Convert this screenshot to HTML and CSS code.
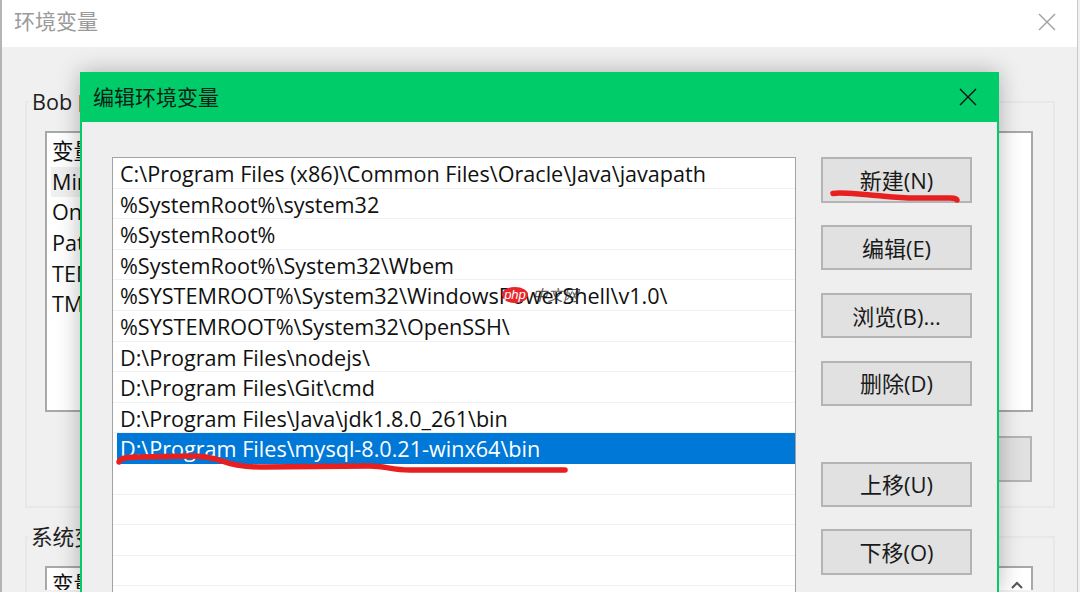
FILE: index.html
```html
<!DOCTYPE html>
<html lang="zh-CN">
<head>
<meta charset="utf-8">
<title>编辑环境变量</title>
<link rel="stylesheet" href="styles.css">
</head>
<body>
<section class="window back">
  <header class="back-title">
    <span class="title-text">环境变量</span>
    <svg class="close" viewBox="0 0 18 18"><path d="M1 1 17 17M17 1 1 17"/></svg>
  </header>
  <div class="back-body">
    <div class="group user">
      <div class="legend">Bob 的用户变量</div>
      <div class="vars">
        <div class="var">变量</div>
        <div class="var sel">MiniConda</div>
        <div class="var">OneDrive</div>
        <div class="var">Path</div>
        <div class="var">TEMP</div>
        <div class="var">TMP</div>
      </div>
      <div class="back-actions"><div class="btn back-btn">删除(D)</div></div>
    </div>
    <div class="group system">
      <div class="legend">系统变量</div>
      <div class="vars sys">
        <div class="var">变量</div>
        <div class="scroll-up"><svg viewBox="0 0 12 8"><path d="M1 7 6 2 11 7"/></svg></div>
      </div>
    </div>
  </div>
</section>

<section class="window dialog">
  <header class="dlg-title">
    <span class="title-text">编辑环境变量</span>
    <svg class="close dark" viewBox="0 0 18 18"><path d="M1 1 17 17M17 1 1 17"/></svg>
  </header>
  <div class="dlg-body">
    <div class="paths">
      <div class="path">C:\Program Files (x86)\Common Files\Oracle\Java\javapath</div>
      <div class="path">%SystemRoot%\system32</div>
      <div class="path">%SystemRoot%</div>
      <div class="path">%SystemRoot%\System32\Wbem</div>
      <div class="path">%SYSTEMROOT%\System32\WindowsPowerShell\v1.0\</div>
      <div class="path">%SYSTEMROOT%\System32\OpenSSH\</div>
      <div class="path">D:\Program Files\nodejs\</div>
      <div class="path">D:\Program Files\Git\cmd</div>
      <div class="path">D:\Program Files\Java\jdk1.8.0_261\bin</div>
      <div class="path active">D:\Program Files\mysql-8.0.21-winx64\bin</div>
      <div class="path"></div>
      <div class="path"></div>
      <div class="path"></div>
      <div class="path"></div>
    </div>
    <div class="actions">
      <div class="btn">新建(N)</div>
      <div class="btn">编辑(E)</div>
      <div class="btn">浏览(B)...</div>
      <div class="btn">删除(D)</div>
      <div class="btn push">上移(U)</div>
      <div class="btn">下移(O)</div>
    </div>
  </div>
</section>

<div class="watermark"><span class="wm-logo">php</span><span class="wm-text">中文网</span></div>

<svg class="ink" viewBox="0 0 1080 592">
  <path d="M119 462C120 458 126 457 140 457L190 456C205 456 214 458 222 461C232 465 245 467 262 467L370 466C385 466 392 470 410 470L565 470"/>
  <path d="M833 193.500C840 192 855 194 870 195C885 196 895 198 915 198L950 198C955 198 957 199 957 200"/>
</svg>
</body>
</html>
```
FILE: styles.css
```css
html, body {
  margin: 0;
  height: 592px;
  overflow: hidden;
  background: #f0f0f0;
  font-family: "Open Sans", "Noto Sans CJK SC", sans-serif;
  color: #111;
}

.window {
  position: absolute;
  box-sizing: border-box;
}

.title-text {
  padding-bottom: 4px;
}

/* background window */
.back {
  left: 0;
  top: 0;
  width: 1078px;
  height: 592px;
  border-left: 2px solid #b4b4b4;
  border-right: 1px solid #c9c9c9;
  display: flex;
  flex-direction: column;
}

.back-title {
  height: 47px;
  flex: none;
  box-sizing: border-box;
  background: #fff;
  color: #9a9a9a;
  font-size: 21px;
  display: flex;
  align-items: center;
  justify-content: space-between;
  padding: 0 21px 3px 12px;
}

.close {
  width: 18px;
  height: 18px;
  fill: none;
  stroke: #a0a0a0;
  stroke-width: 1.4;
}

.close.dark {
  stroke: #111;
}

.back-body {
  flex: 1;
  background: #f0f0f0;
  padding: 54px 22px 0 23px;
  display: flex;
  flex-direction: column;
  gap: 28px;
}

.group {
  border: 2px solid #e8e8e8;
  box-sizing: border-box;
  padding: 0 20px 0 18px;
  flex: none;
}

.group.user {
  height: 407px;
}

.group.system {
  height: 56px;
  border-bottom: 0;
}

.legend {
  font-size: 21.600px;
  line-height: 28px;
  height: 28px;
  margin: -15px 0 15px -16px;
  padding: 0 3px;
  width: fit-content;
  background: #f0f0f0;
  color: #222;
}

.system .legend {
  margin-left: -17px;
}

.vars {
  height: 281px;
  box-sizing: border-box;
  background: #fff;
  border: 2px solid #a8a8a8;
  padding: 3px 4px;
  font-size: 21.600px;
  position: relative;
}

.vars.sys {
  margin-top: 3px;
  height: 24px;
  padding-top: 1px;
  border-bottom: 0;
  overflow: hidden;
}

.var {
  height: 30.700px;
  line-height: 30px;
  padding-left: 1px;
}

.sys .var {
  height: 23px;
  overflow: hidden;
}

.var.sel {
  background: #f0f0f0;
  width: 300px;
}

.scroll-up {
  position: absolute;
  top: 0;
  right: -2px;
  width: 33px;
  height: 24px;
  box-sizing: border-box;
  padding-top: 13px;
  display: flex;
  align-items: flex-start;
  justify-content: center;
}

.scroll-up svg {
  width: 12px;
  height: 8px;
  fill: none;
  stroke: #555;
  stroke-width: 2;
}

.back-actions {
  display: flex;
  justify-content: flex-end;
  margin-top: 24px;
  padding-right: 1px;
}

.back-btn {
  margin: 0;
}

/* foreground dialog */
.dialog {
  left: 80px;
  top: 72px;
  width: 919px;
  height: 520px;
  background: #00cc6a;
  padding: 0 2px;
  box-shadow: 0 0 22px rgba(0, 0, 0, .28);
  display: flex;
  flex-direction: column;
}

.dlg-title {
  height: 50px;
  flex: none;
  box-sizing: border-box;
  font-size: 21px;
  display: flex;
  align-items: center;
  justify-content: space-between;
  padding: 0 20px 0 11px;
  color: #0c1f16;
}

.dlg-title .title-text {
  padding-bottom: 2px;
}

.dlg-body {
  flex: 1;
  min-height: 0;
  overflow: hidden;
  background: #efefef;
  display: flex;
  align-items: flex-start;
  padding: 35px 0 0 30px;
}

.paths {
  width: 684px;
  height: 435px;
  flex: none;
  box-sizing: border-box;
  background: #fff;
  border: 1px solid #a3a3a3;
  border-bottom: 0;
  font-size: 21.600px;
}

.path {
  height: 30.600px;
  box-sizing: border-box;
  line-height: 32px;
  padding-left: 7px;
  border-bottom: 1px solid #f1f1f1;
  white-space: nowrap;
  overflow: hidden;
}

.path.active {
  background: #0078d7;
  color: #fff;
  border-bottom-color: #0078d7;
  margin-left: 4px;
  padding-left: 3px;
}

.actions {
  margin-left: 25px;
  width: 151px;
  display: flex;
  flex-direction: column;
  gap: 22.400px;
}

.btn {
  width: 151px;
  height: 45.500px;
  box-sizing: border-box;
  background: #e1e1e1;
  border: 2px solid #b4b4b4;
  padding-bottom: 2px;
  font-size: 22px;
  display: flex;
  align-items: center;
  justify-content: center;
  color: #1a1a1a;
}

.btn.push {
  margin-top: 33px;
}

/* watermark + hand-drawn marks */
.watermark {
  position: absolute;
  left: 502px;
  top: 287px;
  display: flex;
  align-items: center;
  height: 16px;
  gap: 4px;
}

.wm-logo {
  width: 26px;
  height: 16px;
  border-radius: 50%;
  background: #e8262a;
  color: #fff;
  font: italic 13px/15px "Liberation Sans", sans-serif;
  text-align: center;
}

.wm-text {
  font-size: 15.500px;
  line-height: 16px;
  color: rgba(30, 30, 30, .75);
  font-style: italic;
}

.ink {
  position: absolute;
  left: 0;
  top: 0;
  width: 1080px;
  height: 592px;
  fill: none;
  stroke: #e81f1f;
  stroke-width: 5.500;
  stroke-linecap: round;
  stroke-linejoin: round;
  pointer-events: none;
}
```
